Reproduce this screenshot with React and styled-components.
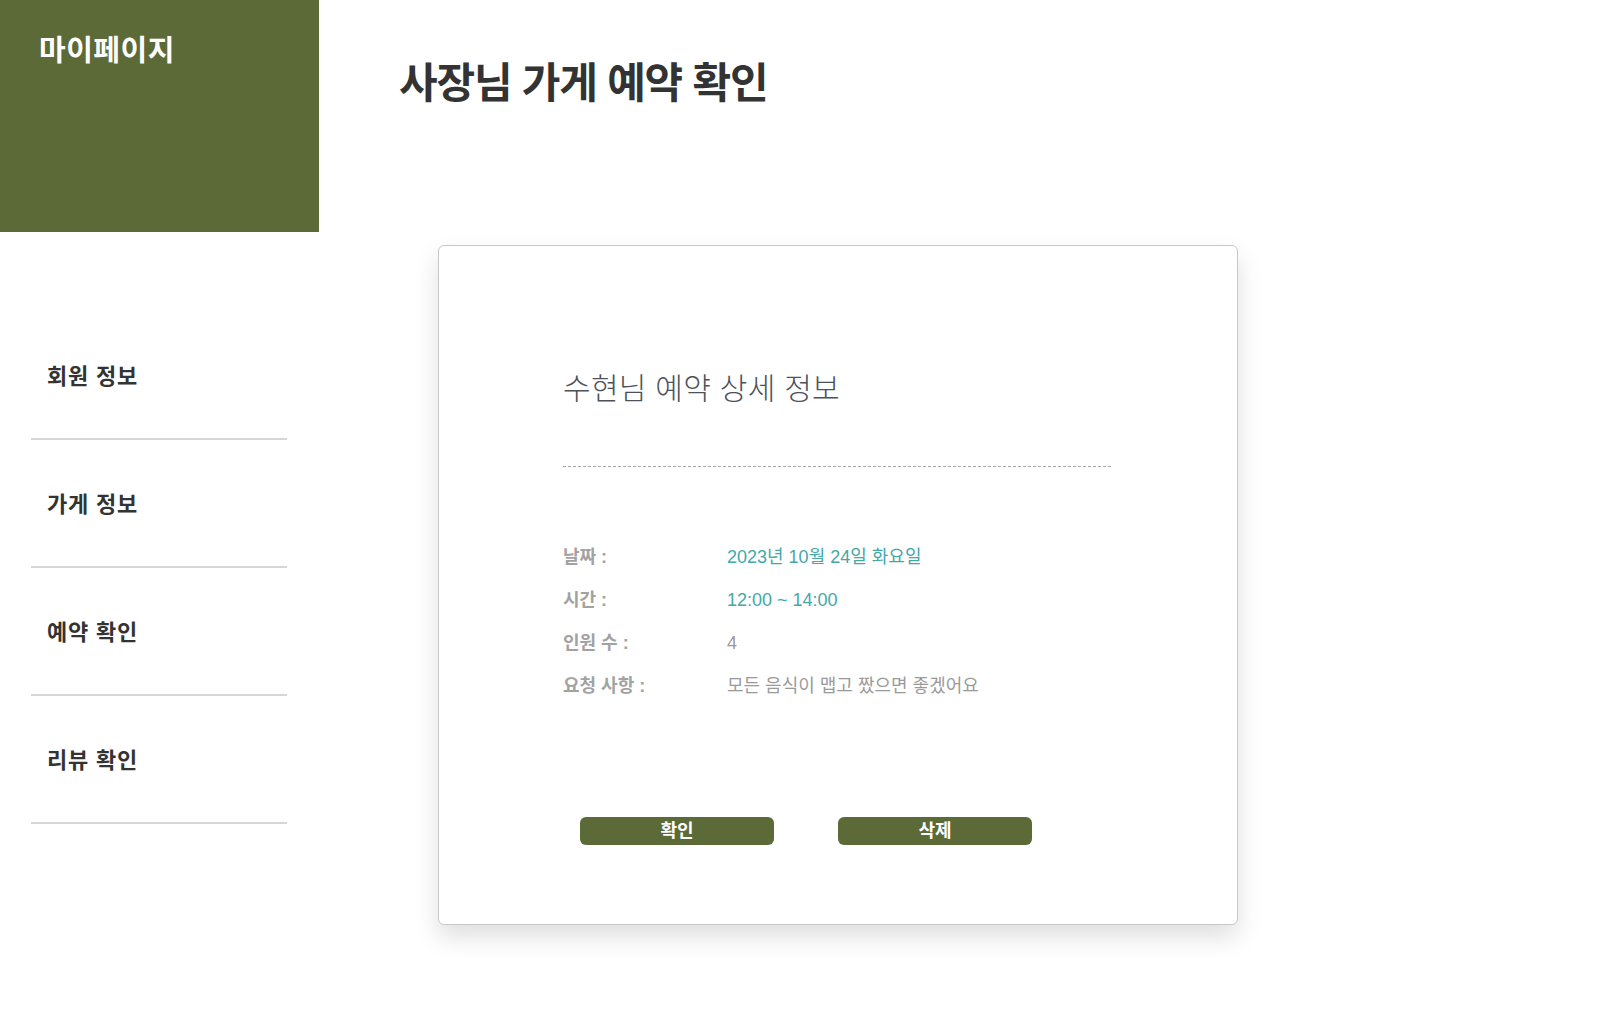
import React from "react";
import styled, { createGlobalStyle } from "styled-components";

const GlobalStyle = createGlobalStyle`
  * {
    box-sizing: border-box;
  }
  body {
    margin: 0;
    background: #fff;
    font-family: "Liberation Sans", "Noto Sans CJK KR", sans-serif;
  }
`;

const Page = styled.div`
  display: flex;
  min-height: 1032px;
`;

const Sidebar = styled.aside`
  width: 319px;
  flex-shrink: 0;
  display: flex;
  flex-direction: column;
`;

const SideHeader = styled.div`
  height: 232px;
  background-color: #5b6a37;
  padding: 27px 0 0 39px;

  h2 {
    margin: 0;
    color: #fff;
    font-size: 29px;
    font-weight: 700;
    letter-spacing: 0.5px;
  }
`;

const MenuList = styled.ul`
  list-style: none;
  margin: 80px 32px 0 31px;
  padding: 0;
`;

const MenuItem = styled.li`
  height: 128px;
  display: flex;
  align-items: center;
  padding: 0 0 3px 16px;
  border-bottom: 2px solid #d6d6d6;
  font-size: 22px;
  font-weight: 700;
  color: #333;
  letter-spacing: 0.8px;
  cursor: pointer;
`;

const Main = styled.main`
  flex: 1;
  padding: 49px 0 0 80px;

  h1 {
    margin: 0;
    font-size: 42px;
    font-weight: 700;
    color: #333;
    letter-spacing: -1.2px;
  }
`;

const Card = styled.section`
  width: 800px;
  height: 680px;
  margin: 135px 0 0 39px;
  border: 1px solid #c8c8c8;
  border-radius: 6px;
  background: #fff;
  box-shadow: 0 12px 24px rgba(0, 0, 0, 0.13);
  padding: 118px 0 0 124px;
`;

const CardTitle = styled.h3`
  margin: 0;
  width: 548px;
  padding-bottom: 58px;
  border-bottom: 1px dashed #a8a8a8;
  font-size: 30px;
  font-weight: 300;
  color: #4d525a;
  letter-spacing: 0.3px;
`;

const InfoList = styled.dl`
  margin: 77px 0 0;
  display: grid;
  grid-template-columns: 164px 1fr;
  row-gap: 17px;
`;

const Label = styled.dt`
  font-size: 18px;
  font-weight: 700;
  color: #a2a2a2;
  line-height: 26px;
`;

const Value = styled.dd`
  margin: 0;
  font-size: 18px;
  line-height: 26px;
  color: ${(p) => (p.$accent ? "#45a8a8" : "#9a9a9a")};
`;

const ButtonRow = styled.div`
  display: flex;
  gap: 64px;
  margin: 118px 0 0 17px;
`;

const ActionButton = styled.button`
  width: 194px;
  height: 28px;
  border: none;
  border-radius: 6px;
  background-color: #5b6a37;
  color: #fff;
  font-family: inherit;
  font-size: 18px;
  font-weight: 700;
  line-height: 28px;
  padding: 0;
  cursor: pointer;
`;

const reserva = [
  { label: "날짜 :", value: "2023년 10월 24일 화요일", accent: true },
  { label: "시간 :", value: "12:00 ~ 14:00", accent: true },
  { label: "인원 수 :", value: "4" },
  { label: "요청 사항 :", value: "모든 음식이 맵고 짰으면 좋겠어요" },
];

const menus = ["회원 정보", "가게 정보", "예약 확인", "리뷰 확인"];

export default function App() {
  return (
    <Page>
      <GlobalStyle />
      <Sidebar>
        <SideHeader>
          <h2>마이페이지</h2>
        </SideHeader>
        <MenuList>
          {menus.map((m) => (
            <MenuItem key={m}>{m}</MenuItem>
          ))}
        </MenuList>
      </Sidebar>

      <Main>
        <h1>사장님 가게 예약 확인</h1>
        <Card>
          <CardTitle>수현님 예약 상세 정보</CardTitle>
          <InfoList>
            {reserva.map((item) => (
              <React.Fragment key={item.label}>
                <Label>{item.label}</Label>
                <Value $accent={item.accent}>{item.value}</Value>
              </React.Fragment>
            ))}
          </InfoList>
          <ButtonRow>
            <ActionButton>확인</ActionButton>
            <ActionButton>삭제</ActionButton>
          </ButtonRow>
        </Card>
      </Main>
    </Page>
  );
}
